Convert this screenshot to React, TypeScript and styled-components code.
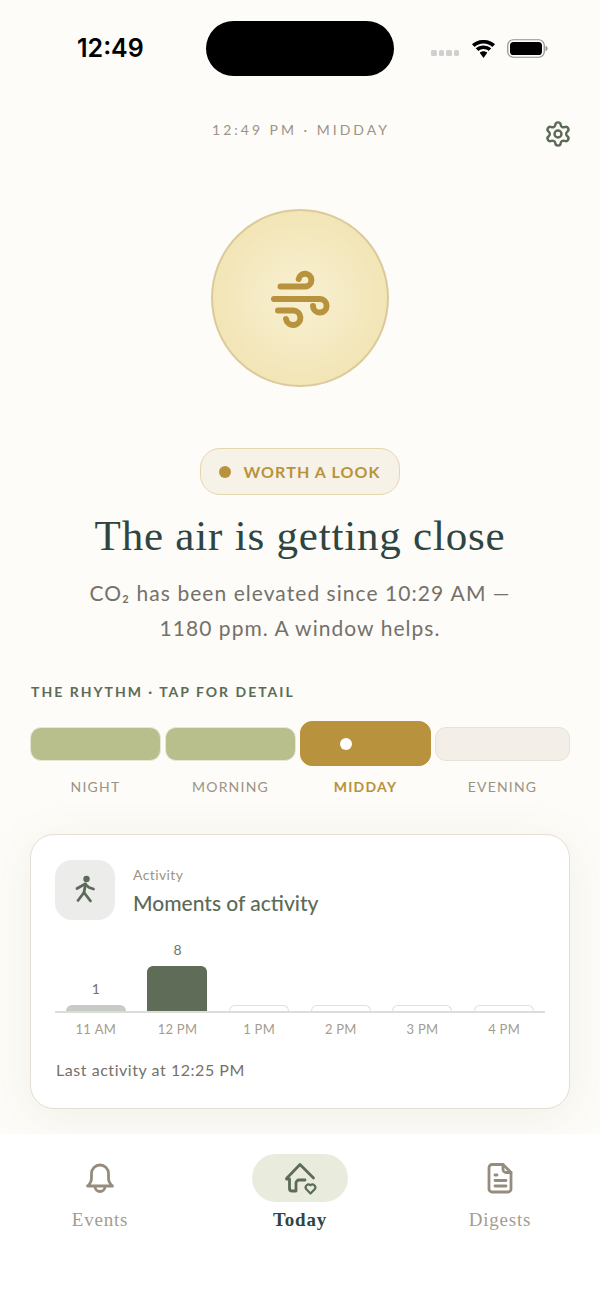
import React from 'react'
import styled, {createGlobalStyle} from 'styled-components'
import {Settings} from 'lucide-react'

const sans = `Lato, 'Open Sans', sans-serif`
const serif = `'Liberation Serif', serif`

const GlobalStyle = createGlobalStyle`
  html, body {
    margin: 0;
    padding: 0;
    background: #fdfcf8;
  }
`

const Screen = styled.div`
  width: 600px;
  height: 1304px;
  display: flex;
  flex-direction: column;
  overflow: hidden;
  background: #fdfcf8;
  font-family: ${sans};
`

const Scroll = styled.div`
  height: 1134px;
  overflow: hidden;
  flex-shrink: 0;
  display: flex;
  flex-direction: column;
  align-items: center;
`

const StatusBar = styled.div`
  width: 100%;
  box-sizing: border-box;
  padding: 21px 52px 0 77px;
  display: flex;
  align-items: flex-start;
  height: 106px;
`

const Clock = styled.div`
  width: 129px;
  font-family: Inter, sans-serif;
  font-weight: 600;
  font-size: 25px;
  line-height: 55px;
  color: #000;
`

const Island = styled.div`
  width: 188px;
  height: 55px;
  border-radius: 28px;
  background: #000;
`

const StatusIcons = styled.div`
  flex: 1;
  height: 55px;
  display: flex;
  align-items: center;
  justify-content: flex-end;
  gap: 11px;
`

const Dots = styled.div`
  display: flex;
  gap: 2px;
  margin-top: 9px;
  margin-right: 1px;
`

const Dot = styled.span`
  width: 5.5px;
  height: 5.5px;
  border-radius: 1.5px;
  background: #d0d0d0;
`

const Header = styled.div`
  width: 100%;
  box-sizing: border-box;
  padding: 0 28px 0 30px;
  height: 50px;
  display: grid;
  grid-template-columns: 42px 1fr 42px;
  align-items: start;
`

const TimeLabel = styled.div`
  grid-column: 2;
  text-align: center;
  font-size: 14px;
  line-height: 48px;
  letter-spacing: 3px;
  color: #9c9384;
`

const GearButton = styled.div`
  display: flex;
  justify-content: flex-end;
  padding-top: 14px;
  color: #5c6b57;
`

const Sun = styled.div`
  width: 178px;
  height: 178px;
  box-sizing: border-box;
  margin-top: 53px;
  border-radius: 50%;
  border: 2.5px solid #dcca9c;
  background: radial-gradient(circle, #f8f0d2 0%, #f2e5b6 70%, #f2e5b5 100%);
  display: flex;
  align-items: center;
  justify-content: center;
`

const Pill = styled.div`
  margin-top: 61px;
  width: 200px;
  height: 47px;
  box-sizing: border-box;
  border: 1.5px solid #e6d6ae;
  border-radius: 20px;
  background: #f6f2e7;
  display: flex;
  align-items: center;
  justify-content: center;
  gap: 12px;
  font-size: 16px;
  font-weight: 700;
  letter-spacing: 1.1px;
  color: #b8923d;
`

const PillDot = styled.span`
  width: 12px;
  height: 12px;
  border-radius: 50%;
  background: #b8923d;
`

const Title = styled.h1`
  margin: 17px 0 0;
  font-family: ${serif};
  font-weight: 400;
  font-size: 43px;
  line-height: 48px;
  letter-spacing: 0.8px;
  color: #2f4542;
`

const Body = styled.p`
  margin: 15px 0 0;
  text-align: center;
  font-size: 21px;
  line-height: 35px;
  letter-spacing: 1.05px;
  color: #74716a;
`

const Section = styled.div`
  width: 540px;
  margin-top: 38px;
`

const SectionLabel = styled.div`
  font-size: 14px;
  line-height: 18px;
  font-weight: 700;
  letter-spacing: 2px;
  color: #5c6b57;
  padding-left: 1px;
`

const Rhythm = styled.div`
  margin-top: 20px;
  display: grid;
  grid-template-columns: 131px 131px 131px 135px;
  gap: 4px;
`

const Phase = styled.div`
  display: flex;
  flex-direction: column;
  align-items: stretch;
`

const BarSlot = styled.div`
  height: 45px;
  display: flex;
  align-items: center;
`

const PhaseBar = styled.div<{$tone: 'past' | 'now' | 'later'}>`
  position: relative;
  width: 100%;
  box-sizing: border-box;
  height: ${(p) => (p.$tone === 'now' ? '45px' : '34px')};
  border-radius: ${(p) => (p.$tone === 'now' ? '12px' : '11px')};
  background: ${(p) => (p.$tone === 'past' ? '#b8bf8c' : p.$tone === 'now' ? '#b8923d' : '#f3efe8')};
  border: 1px solid ${(p) => (p.$tone === 'past' ? '#e6e8d6' : p.$tone === 'now' ? '#b8923d' : '#e5e1d7')};
`

const NowDot = styled.span`
  position: absolute;
  top: 50%;
  left: 39px;
  width: 12px;
  height: 12px;
  margin-top: -6px;
  border-radius: 50%;
  background: #fff;
`

const PhaseName = styled.div<{$active?: boolean}>`
  margin-top: 12px;
  text-align: center;
  font-size: 14px;
  line-height: 18px;
  letter-spacing: 1.2px;
  font-weight: ${(p) => (p.$active ? 700 : 400)};
  color: ${(p) => (p.$active ? '#b8923d' : '#9c9384')};
`

const Card = styled.div`
  width: 540px;
  height: 275px;
  box-sizing: border-box;
  margin-top: 38px;
  padding: 25px 24px 0;
  border: 1.5px solid #e4dfd2;
  border-radius: 24px;
  background: #fff;
  box-shadow: 0 8px 48px rgba(92, 84, 50, 0.08);
  flex-shrink: 0;
`

const CardHead = styled.div`
  display: flex;
  gap: 18px;
`

const IconBox = styled.div`
  width: 60px;
  height: 60px;
  border-radius: 17px;
  background: #ececea;
  color: #5c6b57;
  display: flex;
  align-items: center;
  justify-content: center;
`

const CardTitles = styled.div`
  display: flex;
  flex-direction: column;
`

const Eyebrow = styled.div`
  font-size: 14px;
  line-height: 18px;
  letter-spacing: 0.4px;
  color: #9c9384;
  margin-top: 6px;
`

const CardTitle = styled.div`
  margin-top: 5px;
  font-size: 21px;
  line-height: 28px;
  font-weight: 500;
  color: #5c6b57;
`

const Chart = styled.div`
  margin-top: 21px;
  display: grid;
  grid-template-columns: repeat(6, 1fr);
  height: 72px;
  border-bottom: 2px solid #dcdcd8;
  box-sizing: border-box;
`

const Column = styled.div`
  display: flex;
  flex-direction: column;
  justify-content: flex-end;
  align-items: center;
`

const Count = styled.div`
  font-size: 14px;
  line-height: 18px;
  margin-bottom: 7px;
  color: #74716a;
`

const ChartBar = styled.div<{$tone: 'soft' | 'strong' | 'empty'}>`
  width: 60px;
  box-sizing: border-box;
  border-radius: 6px 6px 0 0;
  background: ${(p) => (p.$tone === 'soft' ? '#c7cdc4' : p.$tone === 'strong' ? '#5e6c58' : '#fff')};
  border: 1px solid ${(p) => (p.$tone === 'soft' ? '#c7cdc4' : p.$tone === 'strong' ? '#5e6c58' : '#e4dfd2')};
  border-bottom: none;
`

const Hours = styled.div`
  display: grid;
  grid-template-columns: repeat(6, 1fr);
  margin-top: 8px;
`

const Hour = styled.div`
  text-align: center;
  font-size: 13px;
  line-height: 17px;
  letter-spacing: 0.3px;
  color: #a49c8e;
`

const Note = styled.div`
  margin-top: 23px;
  padding-left: 1px;
  font-size: 16px;
  line-height: 18px;
  letter-spacing: 0.55px;
  color: #74716a;
`

const TabBar = styled.nav`
  flex: 1;
  background: #fff;
  display: grid;
  grid-template-columns: repeat(3, 200px);
  padding-top: 20px;
`

const Tab = styled.div`
  display: flex;
  flex-direction: column;
  align-items: center;
`

const TabIcon = styled.div<{$active?: boolean}>`
  width: 96px;
  height: 48px;
  border-radius: 24px;
  display: flex;
  align-items: center;
  justify-content: center;
  background: ${(p) => (p.$active ? '#e9ecdd' : 'transparent')};
  color: ${(p) => (p.$active ? '#5c6b57' : '#968c7d')};
`

const TabLabel = styled.div<{$active?: boolean}>`
  margin-top: 6px;
  font-family: ${serif};
  font-size: 19px;
  line-height: 24px;
  letter-spacing: 0.8px;
  font-weight: ${(p) => (p.$active ? 700 : 400)};
  color: ${(p) => (p.$active ? '#2f4542' : '#a49c8e')};
`

const WindIcon = () => (
  <svg width={68} height={68} viewBox="266 264 68 68" fill="none" stroke="#b8923d" strokeWidth={6} strokeLinecap="round">
    <path d="M280.5 286.5H305.5A6.4 6.4 0 1 0 298.7 279" />
    <path d="M274 299H320A6.8 6.8 0 1 1 313 306" />
    <path d="M278 310.5H293A7.25 7.25 0 1 1 286 319" />
  </svg>
)

const WifiIcon = () => (
  <svg width={25} height={18} viewBox="0 0 24 18" fill="#000" preserveAspectRatio="none">
    <path d="M12 3.6c3.3 0 6.3 1.3 8.5 3.4l2.6-2.8A15.6 15.6 0 0 0 12 0 15.6 15.6 0 0 0 .9 4.2L3.5 7c2.2-2.1 5.2-3.4 8.5-3.4z" />
    <path d="M12 9.1c1.9 0 3.6.7 4.9 1.9l2.6-2.7A10.8 10.8 0 0 0 12 5.4c-2.9 0-5.5 1.1-7.5 2.9L7.1 11A7.2 7.2 0 0 1 12 9.1z" />
    <path d="M12 11.2c-1.4 0-2.7.5-3.6 1.5L12 18l3.6-5.3c-.9-1-2.2-1.5-3.6-1.5z" />
  </svg>
)

const BatteryIcon = () => (
  <svg width={41} height={19} viewBox="0 0 41 19">
    <rect x={0.75} y={0.75} width={36.5} height={17.5} rx={5.5} fill="none" stroke="#8f8f8f" strokeWidth={1.2} />
    <rect x={3} y={3} width={32} height={13} rx={3.6} fill="#000" />
    <path d="M38.5 6.7c1.2.4 2 1.5 2 2.8s-.8 2.4-2 2.8z" fill="#8f8f8f" />
  </svg>
)

const WalkIcon = () => (
  <svg width={40} height={40} viewBox="0 0 40 40" fill="none" stroke="currentColor" strokeWidth={2.8} strokeLinecap="round" strokeLinejoin="round">
    <circle cx={21.5} cy={9} r={3.2} fill="currentColor" stroke="none" />
    <path d="M12 18.5l8-4.5 4 3.5 4.5 1.5" />
    <path d="M20.5 14l-1.5 8.5" />
    <path d="M13 30.5l6-8 6.5 8.5" />
  </svg>
)

const BellIcon = () => (
  <svg width={40} height={40} viewBox="0 0 40 40" fill="none" stroke="currentColor" strokeWidth={2.8} strokeLinecap="round" strokeLinejoin="round">
    <path d="M7.5 28c2.4-2 4-4 4-8v-4.5a8.5 8.5 0 0 1 17 0V20c0 4 1.600 6 4 8z" />
    <path d="M15 28.500a5 5 0 0 0 10 0" />
  </svg>
)

const HomeHeartIcon = () => (
  <svg width={40} height={40} viewBox="0 0 40 40" fill="none" stroke="currentColor" strokeWidth={2.8} strokeLinecap="round" strokeLinejoin="round">
    <path d="M7 20 20 6.500 33.500 20" />
    <path d="M6.500 21H9.500V30.500A2.500 2.500 0 0 0 12 33H16V25A3 3 0 0 1 19 22H25" />
    <path d="M30.500 35.500l-4.400-4.500a2.900 2.900 0 0 1 4.400-3.700 2.900 2.900 0 0 1 4.400 3.700z" strokeWidth={2.2} />
  </svg>
)

const DocIcon = () => (
  <svg width={40} height={40} viewBox="0 0 40 40" fill="none" stroke="currentColor" strokeWidth={2.8} strokeLinecap="round" strokeLinejoin="round">
    <path d="M12 6.500h11l8 8V31a3 3 0 0 1-3 3H12a3 3 0 0 1-3-3V9.500a3 3 0 0 1 3-3z" />
    <path d="M23 6.500v5a3 3 0 0 0 3 3h5" />
    <path d="M15 17h2M15 22.500h11M15 28h11" />
  </svg>
)

const phases: {name: string; tone: 'past' | 'now' | 'later'}[] = [
  {name: 'NIGHT', tone: 'past'},
  {name: 'MORNING', tone: 'past'},
  {name: 'MIDDAY', tone: 'now'},
  {name: 'EVENING', tone: 'later'},
]

const hours: {label: string; count?: number; height: number; tone: 'soft' | 'strong' | 'empty'}[] = [
  {label: '11\u202fAM', count: 1, height: 6, tone: 'soft'},
  {label: '12\u202fPM', count: 8, height: 45, tone: 'strong'},
  {label: '1\u202fPM', height: 6, tone: 'empty'},
  {label: '2\u202fPM', height: 6, tone: 'empty'},
  {label: '3\u202fPM', height: 6, tone: 'empty'},
  {label: '4\u202fPM', height: 6, tone: 'empty'},
]

const App = () => (
  <Screen>
    <GlobalStyle />
    <Scroll>
      <StatusBar>
        <Clock>12:49</Clock>
        <Island />
        <StatusIcons>
          <Dots>
            <Dot />
            <Dot />
            <Dot />
            <Dot />
          </Dots>
          <WifiIcon />
          <BatteryIcon />
        </StatusIcons>
      </StatusBar>
      <Header>
        <TimeLabel>12:49 PM · MIDDAY</TimeLabel>
        <GearButton>
          <Settings size={28} strokeWidth={2.1} />
        </GearButton>
      </Header>
      <Sun>
        <WindIcon />
      </Sun>
      <Pill>
        <PillDot />
        WORTH A LOOK
      </Pill>
      <Title>The air is getting close</Title>
      <Body>
        CO₂ has been elevated since 10:29{'\u202f'}AM —
        <br />
        1180 ppm. A window helps.
      </Body>
      <Section>
        <SectionLabel>THE RHYTHM · TAP FOR DETAIL</SectionLabel>
        <Rhythm>
          {phases.map((phase) => (
            <Phase key={phase.name}>
              <BarSlot>
                <PhaseBar $tone={phase.tone}>{phase.tone === 'now' && <NowDot />}</PhaseBar>
              </BarSlot>
              <PhaseName $active={phase.tone === 'now'}>{phase.name}</PhaseName>
            </Phase>
          ))}
        </Rhythm>
      </Section>
      <Card>
        <CardHead>
          <IconBox>
            <WalkIcon />
          </IconBox>
          <CardTitles>
            <Eyebrow>Activity</Eyebrow>
            <CardTitle>Moments of activity</CardTitle>
          </CardTitles>
        </CardHead>
        <Chart>
          {hours.map((hour) => (
            <Column key={hour.label}>
              {hour.count !== undefined && <Count>{hour.count}</Count>}
              <ChartBar $tone={hour.tone} style={{height: hour.height}} />
            </Column>
          ))}
        </Chart>
        <Hours>
          {hours.map((hour) => (
            <Hour key={hour.label}>{hour.label}</Hour>
          ))}
        </Hours>
        <Note>Last activity at 12:25{'\u202f'}PM</Note>
      </Card>
    </Scroll>
    <TabBar>
      <Tab>
        <TabIcon>
          <BellIcon />
        </TabIcon>
        <TabLabel>Events</TabLabel>
      </Tab>
      <Tab>
        <TabIcon $active>
          <HomeHeartIcon />
        </TabIcon>
        <TabLabel $active>Today</TabLabel>
      </Tab>
      <Tab>
        <TabIcon>
          <DocIcon />
        </TabIcon>
        <TabLabel>Digests</TabLabel>
      </Tab>
    </TabBar>
  </Screen>
)

export default App
